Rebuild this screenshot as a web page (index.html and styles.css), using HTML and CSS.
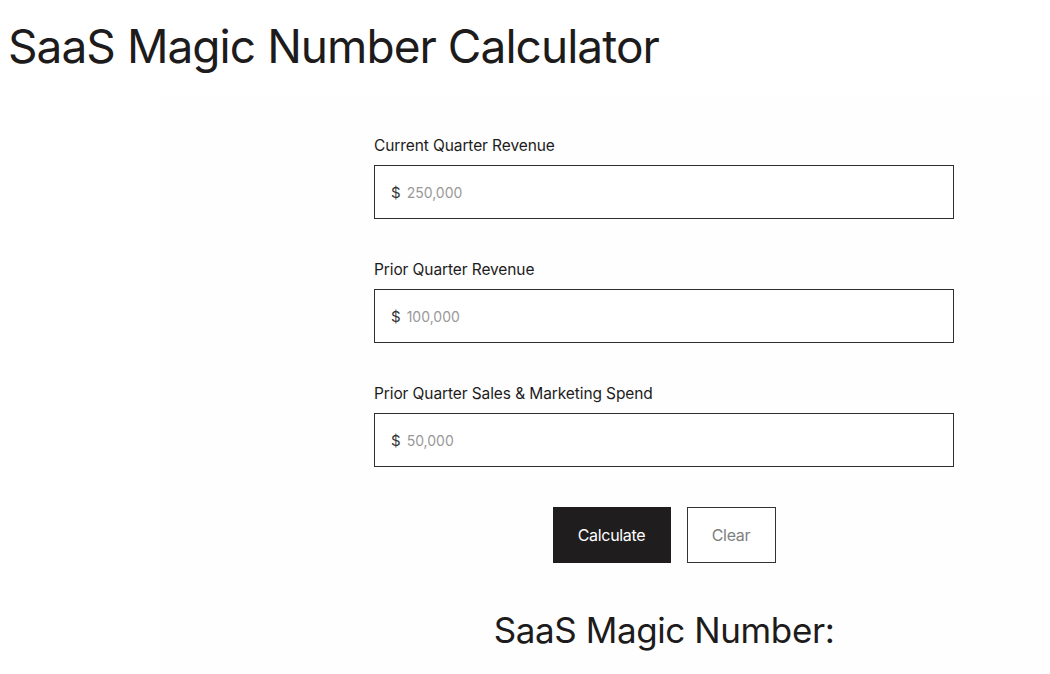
FILE: index.html
```html
<!DOCTYPE html>
<html lang="en">
<head>
<meta charset="utf-8">
<title>SaaS Magic Number Calculator</title>
<link rel="stylesheet" href="styles.css">
</head>
<body>
<h1 class="page-title">SaaS Magic Number Calculator</h1>
<main class="panel">
  <form class="calc">
    <div class="field">
      <label class="field-label" for="cur">Current Quarter Revenue</label>
      <div class="input-box"><span class="cur">$</span><input id="cur" class="input" placeholder="250,000"></div>
    </div>
    <div class="field">
      <label class="field-label" for="prior">Prior Quarter Revenue</label>
      <div class="input-box"><span class="cur">$</span><input id="prior" class="input" placeholder="100,000"></div>
    </div>
    <div class="field">
      <label class="field-label" for="spend">Prior Quarter Sales &amp; Marketing Spend</label>
      <div class="input-box"><span class="cur">$</span><input id="spend" class="input" placeholder="50,000"></div>
    </div>
    <div class="actions">
      <button type="button" class="btn btn-primary">Calculate</button>
      <button type="button" class="btn btn-outline">Clear</button>
    </div>
    <h2 class="result">SaaS Magic Number:</h2>
  </form>
</main>
</body>
</html>
```
FILE: styles.css
```css
html, body { margin: 0; padding: 0; background: #ffffff; }
body {
  font-family: Inter, "Liberation Sans", Arial, sans-serif;
  color: #1d1b1b;
  overflow: hidden;
  height: 674px;
}
.page-title {
  margin: 0;
  padding: 18px 0 0 8px;
  font-size: 46px;
  font-weight: 400;
  letter-spacing: -0.95px;
  line-height: 56px;
  color: #1d1b1b;
}
.panel {
  margin: 22px 0 0 160px;
  background: #fefefe;
  height: 578px;
  padding-top: 40px;
  box-sizing: border-box;
  overflow: hidden;
}
.calc {
  width: 580px;
  margin-left: 214px;
  display: flex;
  flex-direction: column;
}
.field { display: flex; flex-direction: column; margin-bottom: 41px; }
.field:nth-child(3) { margin-bottom: 40px; }
.field-label {
  font-size: 15.5px;
  line-height: 20px;
  letter-spacing: -0.1px;
  color: #1d1b1b;
  margin-bottom: 9px;
}
.input-box {
  height: 52px;
  border: 1px solid #2f2d2d;
  display: flex;
  align-items: center;
  padding-left: 16px;
  background: #fff;
}
.cur { font-size: 15px; color: #333; margin-right: 6px; }
.input {
  border: 0;
  outline: 0;
  background: transparent;
  font-family: inherit;
  font-size: 14px;
  padding: 0;
  flex: 1;
  color: #333;
}
.input::placeholder { color: #999; }
.actions { display: flex; justify-content: center; gap: 16px; }
.btn {
  height: 56px;
  font-family: inherit;
  font-size: 16px;
  letter-spacing: -0.3px;
  cursor: pointer;
}
.btn-primary { width: 118px; background: #1f1d1d; color: #fff; border: 0; }
.btn-outline { width: 89px; background: #fff; color: #808080; border: 1px solid #333; }
.result {
  margin: 46px 0 0;
  text-align: center;
  font-size: 35px;
  font-weight: 400;
  letter-spacing: -0.4px;
  color: #1d1b1b;
}
```
